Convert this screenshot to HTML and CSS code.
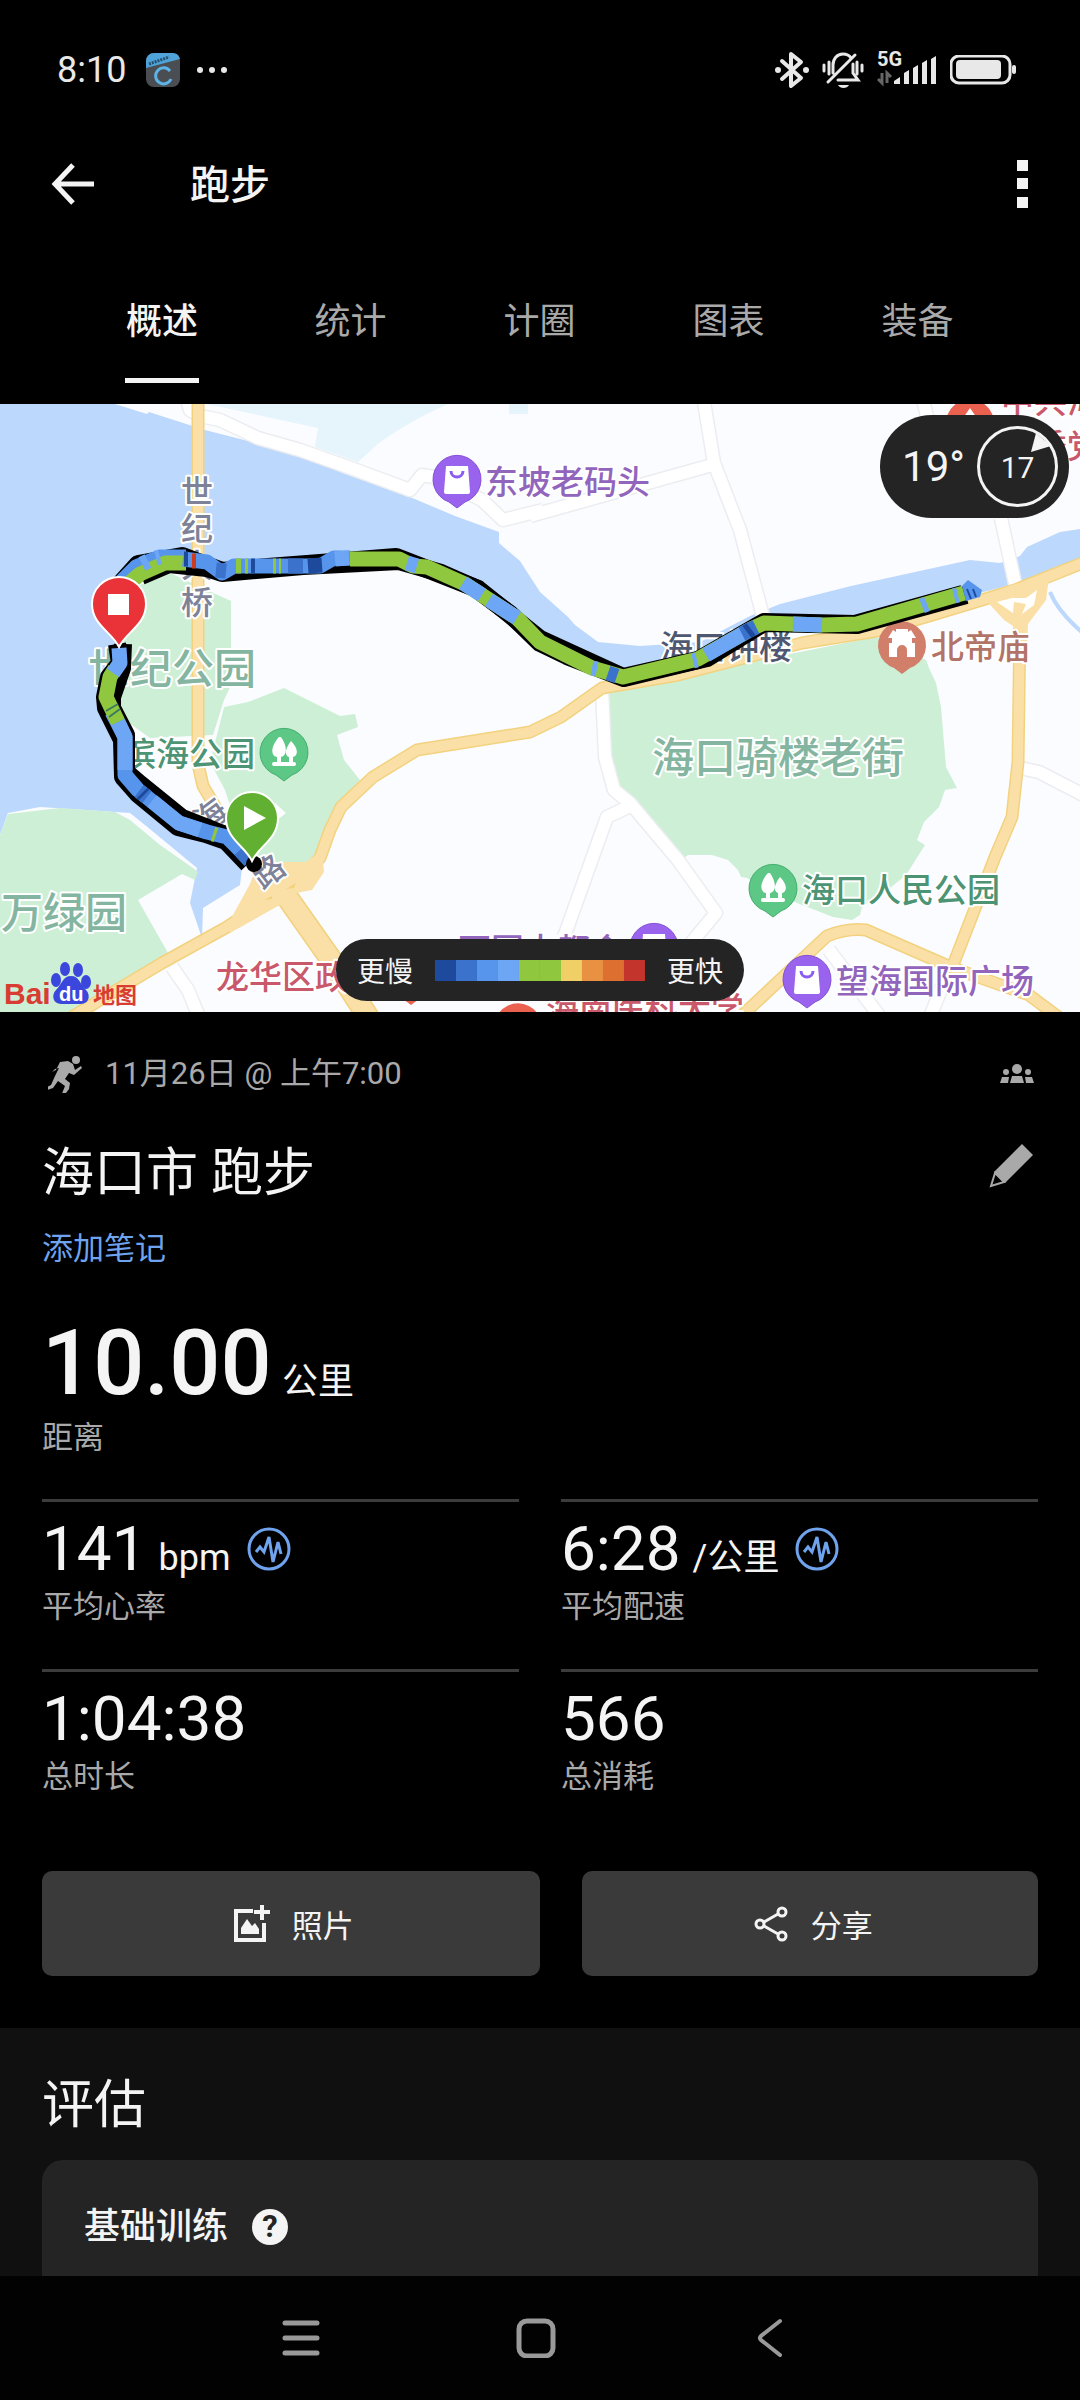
FILE: index.html
```
<!DOCTYPE html>
<html lang="zh-CN">
<head>
    <meta charset="UTF-8">
    <meta name="viewport" content="width=device-width, initial-scale=1.0">
    <title>跑步</title>
    <link rel="stylesheet" href="styles.css">
</head>

<body>
    <div class="status-bar">
        <div class="status-left">
            <span class="time">8:10</span>
            <svg class="app-icon" width="34" height="34" viewBox="0 0 34 34">
                <rect width="34" height="34" rx="8" fill="#4a4d52"/>
                <path d="M0 14V8a8 8 0 0 1 8-8h18a8 8 0 0 1 8 6L0 15z" fill="#4fa3d9"/>
                <path d="M3 11L23 4" stroke="#24506e" stroke-width="3" stroke-dasharray="2 1"/>
                <path d="M24 18a8 8 0 1 0 1 8" fill="none" stroke="#5db2e6" stroke-width="3"/>
            </svg>
            <svg width="32" height="8" viewBox="0 0 32 8" fill="#e8e8e8">
                <circle cx="4" cy="4" r="3"/><circle cx="16" cy="4" r="3"/><circle cx="28" cy="4" r="3"/>
            </svg>
        </div>
        <div class="status-right">
            <svg width="34" height="38" viewBox="0 0 34 38">
                <path d="M7 10l19 17-10 8V3l10 8L7 28" fill="none" stroke="#e8e8e8" stroke-width="4" stroke-linejoin="round" stroke-linecap="round"/>
                <circle cx="3" cy="19" r="3" fill="#e8e8e8"/><circle cx="31" cy="19" r="3" fill="#e8e8e8"/>
            </svg>
            <svg width="42" height="38" viewBox="0 0 42 38" fill="none" stroke="#e8e8e8" stroke-width="3" stroke-linecap="round">
                <path d="M2 14v6M7 11v12M35 11v12M40 14v6"/>
                <path d="M11 22v-8c0-6 4-11 10-11 4 0 6 1 8 4M31 13v9l5 7H16M33 4L6 31"/>
                <path d="M16 34h11c-2 4-9 4-11 0z" fill="#e8e8e8" stroke="none"/>
            </svg>
            <div class="signal">
                <span class="net">5G</span>
                <svg width="60" height="34" viewBox="0 0 60 34">
                    <path d="M1 26l4 4V20M10 30V20l4 4" fill="none" stroke="#666" stroke-width="3"/>
                    <path d="M17 31v-3l6-4v7zM27 31V20l5-3v14zM36 31V15l5-3v19zM45 31V10l5-3v24zM54 31V6l5-3v28z" fill="#e8e8e8"/>
                </svg>
            </div>
            <svg width="66" height="30" viewBox="0 0 66 30">
                <rect x="1" y="1" width="59" height="27" rx="8" fill="none" stroke="#e8e8e8" stroke-width="3"/>
                <rect x="6" y="5" width="45" height="19" rx="4" fill="#e8e8e8"/>
                <rect x="62" y="10" width="4" height="9" rx="2" fill="#e8e8e8"/>
            </svg>
        </div>
    </div>

    <header class="app-bar">
        <button class="icon-btn" aria-label="返回">
            <svg width="44" height="44" viewBox="0 0 44 44" fill="none" stroke="#f4f4f4" stroke-width="5">
                <path d="M22 3L4 22l18 19M4 22h39"/>
            </svg>
        </button>
        <h1>跑步</h1>
        <button class="icon-btn" aria-label="更多">
            <svg width="12" height="48" viewBox="0 0 12 48" fill="#f4f4f4">
                <rect width="11" height="11"/><rect y="18" width="11" height="11"/><rect y="37" width="11" height="11"/>
            </svg>
        </button>
    </header>

    <nav class="tabs">
        <a href="#" class="active">概述</a>
        <a href="#">统计</a>
        <a href="#">计圈</a>
        <a href="#">图表</a>
        <a href="#">装备</a>
    </nav>

    <div class="map">
        <svg class="map-svg" viewBox="0 404 1080 608">
            <defs>
                <g id="pin-body"><path d="M0 28l-8-6a24 24 0 1 1 16 0z"/></g>
                <g id="bag">
                    <path d="M-11-14h22l2 26q0 2-2 2h-22q-2 0-2-2z" fill="#fff"/>
                    <path d="M-6-9c0 8 12 8 12 0" fill="none" stroke="#8b5cf0" stroke-width="3"/>
                </g>
                <g id="trees" fill="#fff">
                    <path d="M-5-16c-9 10-8 19-2 20v6h4V4c6-1 7-10 0-20zM7-12c-7 9-6 15-2 16v6h4V4c5-1 6-8-2-16z"/>
                    <rect x="-12" y="9" width="24" height="4" rx="2"/>
                </g>
                <g id="streets">
                    <path d="M703 396L714 463L740 530L764 620M530 516L712 465M922 396L932 436M1001 518L1016 588"/>
                    <path d="M602 690L605 757L614 790L630 803L678 860L716 913L691 943M628 807L607 817L564 937"/>
                    <path d="M1020 768L1039 772L1089 798M829 950L881 1018M946 977L930 1017M172 967L188 990L200 1019"/>
                    <path d="M186 396L190 410L200 416L220 420L258 438L300 450L348 467L410 490L422 475L434 477L482 500L503 520L543 510"/>
                </g>
                <g id="roads">
                    <path d="M198 396L198 764L203 786L219 813L253 863"/>
                    <path d="M70 1018L162 963L227 927L272 897L300 878L320 858L330 830L341 807L373 777L417 750L530 732L561 717L602 688L678 675L802 643L877 631L929 616L1015 590L1090 560"/>
                    <path d="M1020 620L1018 762L1012 817L995 857L953 965"/>
                    <path d="M735 1022L797 964L827 936Q847 928 866 930L953 968L1029 995L1065 1022"/>
                </g>
            </defs>
            <rect y="404" width="1080" height="608" fill="#fbfcff"/>

            <!-- water -->
            <path class="lake" d="M207 404L318 428L315 447L358 462L379 443Q409 421 448 404z"/>
            <path class="lake" d="M509 404h19v10h-19z"/>
            <path class="water" d="M0 404L115 404L147 414L149 412L205 430L300 454L345 474L410 497L455 516L499 532L499 543L520 561L540 592L568 617L575 625L598 642L640 646L700 642L750 616L780 604L851 586L970 560L1000 563L1020 556L1027 547L1060 532L1080 529L1080 562L1015 584L960 598L857 628L764 628L690 665L624 680L560 660L510 615L465 590L399 565L222 575L165 570L140 582L112 610L118 650L105 700L122 738L125 775L138 795L180 825L225 840L250 862L242 868L240 885L203 908L202 938L190 903L197 868L145 825L130 813L115 812L40 807L8 813L0 835z"/>
            <path d="M1050 592q8 20 34 42" fill="none" stroke="#bdd8fd" stroke-width="4"/>

            <!-- parks -->
            <path class="park" d="M0 835L8 814L60 808L115 812L130 820L160 845L193 868L198 872L195 880L182 874L138 900L168 953L83 1010L75 1012L0 1012z"/>
            <path class="park" d="M118 620L140 585L168 572L231 601L231 685L224 700L213 735L150 738L125 720L110 690z"/>
            <path class="park" d="M284 688L340 716L355 714L358 727L337 735L344 760L360 780L344 800L330 829L322 846L310 862L275 862L245 850L225 790L210 762L219 727L224 707L248 702z"/>
            <path class="park" d="M603 695L678 676L876 637L926 660L929 668L936 683L941 707L946 767L957 788L945 790L939 807L924 822L917 840L925 845L906 875L890 888L862 907L860 915L852 920L833 917L797 903L747 878L741 877L738 870L728 860L712 855L688 855L681 860L650 820L631 798L619 788L611 760z"/>
            <path d="M275 803l11 10-11 9z" fill="#fbfcff"/>

            <!-- streets and main roads, each drawn as edge and fill -->
            <use href="#streets" class="street-edge"/>
            <use href="#streets" class="street"/>
            <use href="#roads" class="road-edge"/>
            <path d="M275 880L330 958L370 1020" class="wide-edge"/>
            <use href="#roads" class="road"/>
            <path d="M275 880L330 958L370 1020" class="wide"/>
            <path d="M258 862L306 862L322 850L324 872L312 890L296 893L290 902L278 906L230 933L228 924L250 884z" fill="#fae0a6"/>
            <path d="M286 889l10-6-2 5zM264 900l8-4 0 3z" fill="#f2d27f"/>
            <path d="M982 596L1015 584L1049 578L1046 600L1028 624L1027 650L1014 650L1013 626L1004 620z" fill="#fae0a6"/>
            <path d="M997 602L1012 598L1026 598L1037 590L1034 605L1022 614L1026 604L1014 602L1013 613z" fill="#fff"/>

            <!-- place names under the track -->
            <g class="label road-name">
                <text x="181" y="503">世</text>
                <text x="181" y="540">纪</text>
                <text x="181" y="577">大</text>
                <text x="181" y="614">桥</text>
                <text transform="translate(210 815) rotate(-37)" x="-16" y="12">海</text>
                <text transform="translate(268 871) rotate(-37)" x="-16" y="12">路</text>
            </g>
            <g class="label area">
                <text x="88" y="684">世纪公园</text>
                <text x="1" y="928">万绿园</text>
                <text x="652" y="773">海口骑楼老街</text>
            </g>
            <g class="label green">
                <text x="123" y="766">滨海公园</text>
                <text x="802" y="902">海口人民公园</text>
            </g>
            <g class="label purple">
                <text x="485" y="494">东坡老码头</text>
                <text x="458" y="962">万国大都会</text>
                <text x="836" y="993">望海国际广场</text>
            </g>
            <g class="label red">
                <text x="216" y="989">龙华区政府</text>
                <text x="546" y="1021">海南医科大学</text>
                <text x="1001" y="413">中共海</text>
                <text x="1001" y="458">省委党</text>
            </g>
            <text class="label brown" x="931" y="659">北帝庙</text>
            <text class="label dark" x="660" y="659">海口钟楼</text>

            <!-- poi pins -->
            <g fill="#5dc885" stroke="#45ae6e">
                <use href="#pin-body" x="284" y="753"/>
                <use href="#pin-body" x="773" y="889"/>
            </g>
            <g fill="#9a63ee" stroke="#8450d6">
                <use href="#pin-body" x="457" y="480"/>
                <use href="#pin-body" x="807" y="980"/>
                <use href="#pin-body" x="654" y="948"/>
            </g>
            <g fill="#ea6150">
                <use href="#pin-body" x="970" y="424"/>
                <use href="#pin-body" x="518" y="1028"/>
                <use href="#pin-body" x="411" y="977"/>
            </g>
            <use href="#pin-body" x="902" y="646" fill="#d17f6b"/>
            <use href="#trees" x="284" y="753"/>
            <use href="#trees" x="773" y="889"/>
            <use href="#bag" x="457" y="480"/>
            <use href="#bag" x="807" y="980"/>
            <use href="#bag" x="654" y="948"/>
            <path d="M970 408l9 13h-18z" fill="#fff"/>
            <path d="M888 638l5-8 3 2v-3h12v3l3-2 5 8h-4v5h3v14h-8v-7a5 5 0 0 0-10 0v7h-8v-14h3v-5z" fill="#fff"/>

            <!-- run track -->
            <g class="track">
                <path class="shadow" d="M248 864L226 841L206 834L178 827L138 794L123 777L122 740L106 708L105 697L109 677L120 663L117 644"/>
                <path class="shadow" d="M249 862L228 836L208 828L182 818L140 784L126 772L126 735L112 708L112 697L122 668L123 644"/>
                <path class="shadow" d="M120 584L138 564L182 556L222 571L268 567L320 563L396 557L427 569L478 589L540 639L623 677L698 660L764 622L855 624L963 594"/>
                <path class="shadow" d="M141 576L169 564L207 568L222 573L303 566L399 561L441 573L475 588L510 614L540 643L567 656L624 678L707 658L764 623L857 625L966 595"/>
                <path class="blue" d="M115 588L136 567L160 557L186 557"/>
                <path class="green" d="M119 592L140 574L165 563L186 563"/>
                <path class="blue" d="M183 559L207 562L222 573L234 566L320 566L334 558L350 558"/>
                <path class="green" d="M350 559L399 559L413 566L427 567L465 584L517 618L540 642L592 668L623 677L698 659L753 628L764 623L822 625L857 624L964 593"/>
                <path class="light" d="M142 564L148 561M156 558L160 557M463 583L482 595M489 600L517 618M793 624L822 625M335 559L349 558M407 563L417 566M592 668L597 669M922 606L927 604M693 661L697 660M954 596L958 595"/>
                <path class="light" d="M706 655L751 629" stroke="#5795ec"/>
                <path class="mid" d="M216 570L226 571M288 566L303 566M742 634L756 627M608 673L617 676"/>
                <path class="deep" d="M308 566L322 565M251 566L255 566M747 632L751 629M184 559L188 559"/>
                <path class="hot" d="M192 561L196 561"/>
                <path class="green" d="M236 566L241 566M245 566L248 566M273 566L276 566M279 566L281 566"/>
                <path class="blue" d="M248 858L227 837L207 832L179 823L138 790L125 775L125 737L112 712"/>
                <path class="light" d="M200 830L179 823L152 801M125 770L125 737L118 722"/>
                <path class="mid" d="M147 797L139 791M250 861L240 850"/>
                <path class="deep" d="M144 795L142 793"/>
                <path class="green" d="M118 722L106 697L110 677L115 669M213 834L216 835"/>
                <path class="light" d="M113 673L120 663L119 648"/>
                <path class="thin" d="M106 711l12-7M109 717l11-8"/>
            </g>
            <path d="M962 586L968 580L982 590L980 597L966 601z" fill="#5795ec"/>
            <path d="M967 589l4 10M973 589l3 8" stroke="#1e4a9e" stroke-width="2"/>
            <circle cx="254" cy="864" r="8"/>

            <g stroke="#fff" stroke-width="2">
                <path d="M119 647c-7-15-27-22-27-43a27 27 0 0 1 54 0c0 21-20 28-27 43z" fill="#e93338"/>
                <path d="M252 861c-7-15-26-22-26-43a26 26 0 0 1 52 0c0 21-19 28-26 43z" fill="#62b031"/>
            </g>
            <path d="M108 594h21v21h-21zM244 806l22 12-22 12z" fill="#fff"/>

            <!-- map provider mark -->
            <g fill="#3b46dc">
                <path d="M71 976c8 0 9 8 15 14 5 5 3 14-5 14H61c-8 0-10-9-5-14 6-6 7-14 15-14z"/>
                <ellipse cx="56" cy="980" rx="5" ry="7"/><ellipse cx="65" cy="969" rx="5" ry="7"/>
                <ellipse cx="78" cy="970" rx="5" ry="7"/><ellipse cx="86" cy="982" rx="5" ry="7"/>
            </g>
            <text class="mark" x="4" y="1004">Bai</text>
            <text class="mark-du" x="59" y="1001">du</text>
            <text class="mark-cn" x="93" y="1003">地图</text>
        </svg>

        <div class="weather">
            <span class="temp">19°</span>
            <span class="wind">17
                <svg viewBox="0 0 20 20" width="20" height="20"><path d="M5 0l15 13-20 6z" fill="#f4f4f4"/></svg>
            </span>
        </div>
        <div class="legend">
            <span>更慢</span>
            <div class="scale">
                <i class="c1"></i><i class="c2"></i><i class="c3"></i><i class="c4"></i><i class="c5"></i>
                <i class="c5"></i><i class="c6"></i><i class="c7"></i><i class="c8"></i><i class="c9"></i>
            </div>
            <span>更快</span>
        </div>
    </div>

    <main class="summary">
        <div class="date-row">
            <svg width="36" height="38" viewBox="0 0 36 38">
                <circle cx="28" cy="5" r="4" fill="#a9a9a9"/>
                <path d="M8 15l4-8 8-1 5 3 2 6 6-4 1 2-8 7-5-2-4 6 5 4-1 6-6 8-2-1 4-10-7-5-5 7-9 3-1-2 8-4 4-9 4-8-4 1-3 3z" fill="#a9a9a9"/>
            </svg>
            <span class="date">11月26日 @ 上午7:00</span>
            <svg class="right" width="34" height="20" viewBox="0 0 34 20" fill="#a9a9a9">
                <circle cx="17" cy="5" r="5"/><circle cx="6" cy="8" r="3"/><circle cx="28" cy="8" r="3"/>
                <path d="M10 19l2-7h10l2 7zM0 19l2-6h7l-1 6zM34 19l-2-6h-7l1 6z"/>
            </svg>
        </div>
        <div class="title-row">
            <h2>海口市 跑步</h2>
            <button class="icon-btn" aria-label="编辑">
                <svg width="46" height="46" viewBox="0 0 46 46">
                    <path d="M34 1l11 11-28 28-11-11z" fill="#a9a9a9"/>
                    <path d="M7 30L3 43l13-4z" fill="none" stroke="#a9a9a9" stroke-width="2"/>
                </svg>
            </button>
        </div>
        <a href="#" class="note">添加笔记</a>

        <div class="distance">
            <div class="big">10.00 <span class="unit">公里</span></div>
            <div class="name">距离</div>
        </div>

        <div class="stats">
            <div class="stat">
                <div class="value">141 <span class="unit">bpm</span>
                    <svg class="wave" width="44" height="44" viewBox="0 0 44 44" fill="none" stroke="#6fa3ee">
                        <circle cx="22" cy="22" r="20" stroke-width="3"/>
                        <path d="M9 25l4-5 4 5 5-15 4 25 5-20 3 12" stroke-width="3"/>
                    </svg>
                </div>
                <div class="name">平均心率</div>
            </div>
            <div class="stat">
                <div class="value">6:28 <span class="unit">/公里</span>
                    <svg class="wave" width="44" height="44" viewBox="0 0 44 44" fill="none" stroke="#6fa3ee">
                        <circle cx="22" cy="22" r="20" stroke-width="3"/>
                        <path d="M9 25l4-5 4 5 5-15 4 25 5-20 3 12" stroke-width="3"/>
                    </svg>
                </div>
                <div class="name">平均配速</div>
            </div>
            <div class="stat">
                <div class="value">1:04:38</div>
                <div class="name">总时长</div>
            </div>
            <div class="stat">
                <div class="value">566</div>
                <div class="name">总消耗</div>
            </div>
        </div>

        <div class="actions">
            <button>
                <svg width="38" height="38" viewBox="0 0 38 38" fill="#f4f4f4">
                    <path d="M20 6H3v29h28V18" fill="none" stroke="#f4f4f4" stroke-width="4"/>
                    <path d="M8 29v-6l6-9 5 7 3-3 4 6v5zM27 0h4v5h6v4h-6v6h-4V9h-6V5h6z"/>
                </svg>
                照片
            </button>
            <button>
                <svg width="38" height="38" viewBox="0 0 38 38" fill="none" stroke="#f4f4f4" stroke-width="3">
                    <circle cx="30" cy="7" r="4"/><circle cx="8" cy="19" r="4"/><circle cx="30" cy="31" r="4"/>
                    <path d="M12 17l14-8M12 21l14 8"/>
                </svg>
                分享
            </button>
        </div>
    </main>

    <section class="assess">
        <h2>评估</h2>
        <div class="card">
            <h3>基础训练</h3>
            <button class="help" aria-label="帮助">?</button>
        </div>
    </section>

    <footer class="sys-nav">
        <svg width="40" height="40" viewBox="0 0 40 40" stroke="#999" stroke-width="5" stroke-linecap="round"><path d="M4 5h32M4 20h32M4 35h32"/></svg>
        <svg width="40" height="40" viewBox="0 0 40 40" fill="none" stroke="#999" stroke-width="5"><rect x="3" y="3" width="34" height="35" rx="8"/></svg>
        <svg width="40" height="40" viewBox="0 0 40 40" fill="none" stroke="#999" stroke-width="4" stroke-linecap="round"><path d="M29 3L10 18q-2 2 0 4l19 15"/></svg>
    </footer>
</body>
</html>
```
FILE: styles.css
```
* {
    box-sizing: border-box;
}
body {
    margin: 0;
    min-height: 100vh;
    display: flex;
    flex-direction: column;
    background-color: #000;
    color: #f4f4f4;
    font-family: Roboto, "Noto Sans CJK SC", sans-serif;
}
h1, h2, h3 {
    margin: 0;
}
svg {
    display: block;
    flex-shrink: 0;
}
button {
    font-family: inherit;
    color: inherit;
    border: none;
    padding: 0;
    cursor: pointer;
}
a {
    text-decoration: none;
}

/* status bar */
.status-bar {
    height: 140px;
    padding: 0 64px 0 57px;
    display: flex;
    align-items: center;
    justify-content: space-between;
    color: #e8e8e8;
}
.status-left {
    display: flex;
    align-items: center;
    gap: 16px;
}
.time {
    font-size: 36px;
    width: 73px;
}
.status-right {
    display: flex;
    align-items: center;
    gap: 13px;
}
.signal {
    position: relative;
}
.net {
    position: absolute;
    top: -4px;
    left: 0;
    font-size: 20px;
    line-height: 20px;
    font-weight: 700;
}

/* title bar */
.app-bar {
    height: 88px;
    padding: 0 51px;
    display: flex;
    align-items: center;
}
.app-bar h1 {
    flex: 1;
    margin-left: 95px;
    padding-top: 3px;
    font-size: 40px;
    line-height: 60px;
    font-weight: 500;
}
.icon-btn {
    background: none;
}

/* tabs */
.tabs {
    display: flex;
    padding: 72px 68px 21px;
}
.tabs a {
    flex: 1;
    padding-bottom: 34px;
    border-bottom: 5px solid transparent;
    font-size: 36px;
    line-height: 44px;
    text-align: center;
    color: #a9a9a9;
}
.tabs .active {
    flex: 0 0 74px;
    margin: 0 57px;
    color: #f4f4f4;
    font-weight: 500;
    border-bottom-color: #f4f4f4;
}

/* map */
.map {
    position: relative;
    overflow: hidden;
}
.map-svg {
    width: 100%;
    height: auto;
}
.water {
    fill: #bdd8fd;
}
.lake {
    fill: #e5f5fb;
}
.park {
    fill: #cdefd6;
}
.street-edge, .street, .road-edge, .road, .wide-edge, .wide {
    fill: none;
    stroke-linejoin: round;
}
.street-edge {
    stroke: #ecedf0;
    stroke-width: 15;
}
.street {
    stroke: #fff;
    stroke-width: 12;
}
.road-edge {
    stroke: #f2d27f;
    stroke-width: 13;
}
.road {
    stroke: #fae0a6;
    stroke-width: 10;
}
.wide-edge {
    stroke: #f2d27f;
    stroke-width: 23;
}
.wide {
    stroke: #fae0a6;
    stroke-width: 20;
}
.label {
    font-size: 33px;
    font-weight: 500;
    stroke: #fff;
    stroke-width: 4;
    stroke-linejoin: round;
    paint-order: stroke;
}
.road-name {
    font-size: 32px;
    fill: #7d8298;
}
.area {
    font-size: 42px;
    fill: #84b5a0;
}
.green {
    fill: #4c9474;
}
.purple {
    fill: #9265bd;
}
.red {
    fill: #c9586a;
}
.brown {
    fill: #b37468;
}
.dark {
    fill: #4f5870;
}
.track path {
    fill: none;
    stroke-width: 15;
    stroke-linejoin: round;
}
.track .shadow {
    stroke: #000;
    stroke-width: 18;
}
.track .blue {
    stroke: #5795ec;
}
.track .light {
    stroke: #6ea6f6;
}
.track .mid {
    stroke: #3a72cc;
}
.track .deep {
    stroke: #1e4a9e;
}
.track .green {
    stroke: #8fc73f;
}
.track .hot {
    stroke: #cc3b22;
}
.track .thin {
    stroke: #3a7a5c;
    stroke-width: 2;
}
.mark {
    fill: #d93c33;
    font: 700 30px "Liberation Sans", sans-serif;
}
.mark-du {
    fill: #fff;
    font: 700 20px "Liberation Sans", sans-serif;
}
.mark-cn {
    fill: #d93c33;
    font-size: 22px;
    font-weight: 700;
}
.weather {
    position: absolute;
    top: 11px;
    right: 11px;
    height: 103px;
    padding: 0 11px 0 22px;
    display: flex;
    align-items: center;
    gap: 12px;
    border-radius: 52px;
    background-color: #242424;
}
.temp {
    font-size: 42px;
}
.wind {
    position: relative;
    width: 81px;
    height: 81px;
    border: 3px solid #f4f4f4;
    border-radius: 50%;
    font-size: 30px;
    line-height: 78px;
    text-align: center;
}
.wind svg {
    position: absolute;
    top: 4px;
    right: 4px;
}
.legend {
    position: absolute;
    bottom: 11px;
    left: 50%;
    transform: translateX(-50%);
    height: 62px;
    padding: 0 21px;
    display: flex;
    align-items: center;
    gap: 22px;
    border-radius: 31px;
    background-color: #242424;
    font-size: 28px;
    white-space: nowrap;
}
.scale {
    display: flex;
}
.scale i {
    width: 21px;
    height: 21px;
}
.c1 { background-color: #1e4a9e; }
.c2 { background-color: #3a72cc; }
.c3 { background-color: #5795ec; }
.c4 { background-color: #6ea6f6; }
.c5 { background-color: #8fc73f; }
.c6 { background-color: #f0cf66; }
.c7 { background-color: #e99143; }
.c8 { background-color: #dd7031; }
.c9 { background-color: #c2342c; }

/* summary */
.summary {
    padding: 39px 42px 52px;
}
.date-row {
    display: flex;
    align-items: center;
    height: 46px;
    padding: 0 4px 0 6px;
    color: #a9a9a9;
}
.date {
    margin-left: 21px;
    font-size: 31px;
    line-height: 44px;
}
.right {
    margin-left: auto;
}
.title-row {
    display: flex;
    align-items: center;
    justify-content: space-between;
    margin-top: 39px;
}
.title-row .icon-btn {
    padding: 0 4px 16px 0;
}
.title-row h2, .assess h2 {
    font-size: 52px;
    line-height: 76px;
    font-weight: 400;
}
.note {
    display: inline-block;
    margin-top: 14px;
    font-size: 31px;
    line-height: 46px;
    color: #6fa3ee;
}
.name {
    font-size: 31px;
    line-height: 46px;
    color: #a9a9a9;
}
.distance {
    margin-top: 41px;
}
.big {
    font-size: 90px;
    line-height: 102px;
    font-weight: 500;
}
.unit {
    font-size: 36px;
    line-height: 44px;
    font-weight: 400;
}
.big .unit {
    margin-left: -12px;
}
.stats {
    display: grid;
    grid-template-columns: 1fr 1fr;
    column-gap: 42px;
    margin-top: 38px;
}
.stat {
    height: 170px;
    padding-top: 12px;
    border-top: 3px solid #3c3c3c;
}
.value {
    display: flex;
    align-items: baseline;
    font-size: 62px;
    line-height: 70px;
}
.value .unit {
    margin-left: 12px;
}
.wave {
    align-self: center;
    margin-left: 16px;
}
.actions {
    display: grid;
    grid-template-columns: 12fr 11fr;
    column-gap: 42px;
    margin-top: 32px;
}
.actions button {
    display: flex;
    align-items: center;
    justify-content: center;
    gap: 21px;
    height: 105px;
    padding-left: 5px;
    border-radius: 10px;
    background-color: #3a3a3a;
    font-size: 31px;
}

/* assessment */
.assess {
    flex: 1;
    display: flex;
    flex-direction: column;
    padding: 40px 42px 0;
    background-color: #101010;
}
.card {
    flex: 1;
    display: flex;
    align-items: center;
    gap: 24px;
    margin-top: 16px;
    padding: 38px 42px 20px;
    border-radius: 21px 21px 0 0;
    background-color: #242424;
}
.card h3 {
    font-size: 36px;
    line-height: 54px;
    font-weight: 500;
}
.help {
    width: 36px;
    height: 36px;
    border-radius: 50%;
    background-color: #f4f4f4;
    color: #242424;
    font-size: 31px;
    line-height: 36px;
    font-weight: 700;
}

/* system navigation */
.sys-nav {
    display: flex;
    justify-content: center;
    align-items: center;
    gap: 195px;
    height: 124px;
    padding-right: 8px;
    background-color: #020202;
}
```
